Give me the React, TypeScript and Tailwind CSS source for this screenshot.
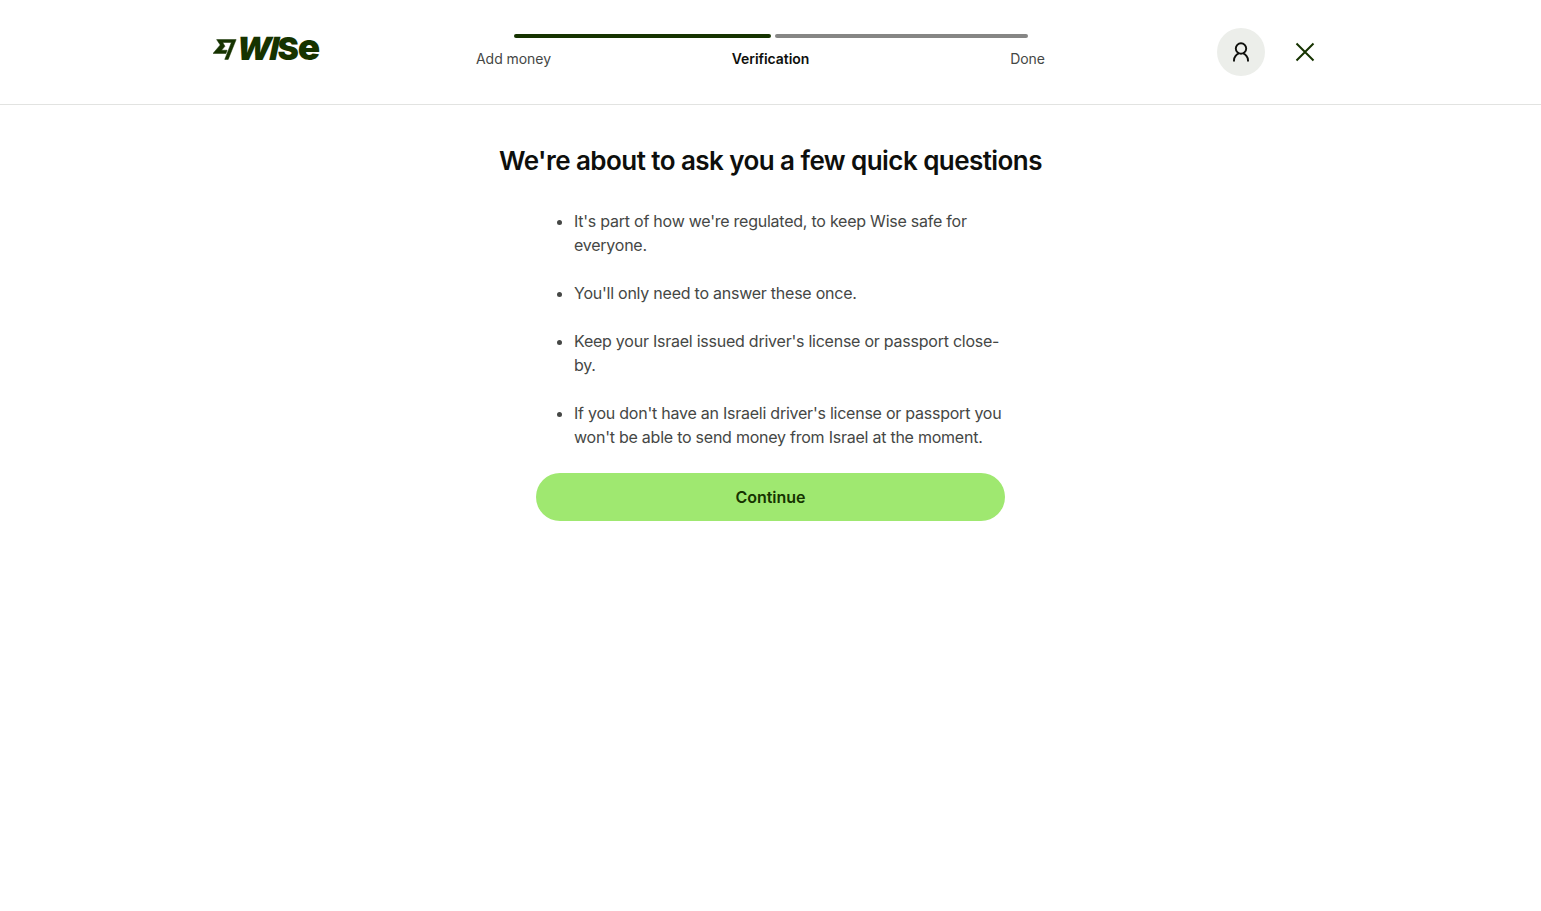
import React from 'react';

const STEPS = [
  { label: 'Add money', active: false },
  { label: 'Verification', active: true },
  { label: 'Done', active: false },
];

const ITEMS = [
  "It's part of how we're regulated, to keep Wise safe for everyone.",
  "You'll only need to answer these once.",
  "Keep your Israel issued driver's license or passport close-by.",
  "If you don't have an Israeli driver's license or passport you won't be able to send money from Israel at the moment.",
];

const Logo: React.FC = () => (
  <div className="flex items-center text-[#163300] -mt-[6px]">
    <svg width="25" height="25" viewBox="0 0 24 24" fill="currentColor" stroke="currentColor" strokeWidth="0.5" aria-hidden="true">
      <path d="M6.94 7.64 0 15.75h12.39l1.11-3.06H8.19l3.25-3.76.01-.1-2.11-3.63h8.3L11.28 21.5h3.32L22.2 2.5H3.48z" />
    </svg>
    <div className="flex items-baseline leading-none font-black -ml-[1px] -mt-[5px]">
      <span className="text-[32px] tracking-[-1.5px] -skew-x-12">WI</span>
      <span className="text-[32px]">S</span>
      <span className="text-[37px] -ml-[1px]">e</span>
    </div>
  </div>
);

const Stepper: React.FC = () => (
  <div className="w-[514px]">
    <div className="flex gap-1">
      <div className="h-1 w-[257px] rounded-full bg-[#163300]"></div>
      <div className="h-1 flex-1 rounded-full bg-[#868685]"></div>
    </div>
    <div className="flex justify-between mt-[10px]">
      {STEPS.map(step => (
        <div key={step.label} className="w-0 flex justify-center">
          <span className={`whitespace-nowrap text-sm leading-[22px] tracking-[-0.05px] ${step.active ? 'font-semibold text-[#0e0f0c]' : 'text-[#454745]'}`}>
            {step.label}
          </span>
        </div>
      ))}
    </div>
  </div>
);

export default function App() {
  return (
    <div className="min-h-screen bg-white font-['Inter',sans-serif]">
      {/* Header */}
      <header className="h-[105px] border-b border-[#e2e3e1]">
        <div className="w-[1116px] h-full mx-auto grid grid-cols-[1fr_auto_1fr] items-center">
          <Logo />
          <Stepper />
          <div className="flex justify-end items-center gap-4">
            <div className="w-12 h-12 rounded-full bg-[#eceeea] flex items-center justify-center text-[#0e0f0c]">
              <svg width="24" height="24" viewBox="0 0 24 24" fill="none" stroke="currentColor" strokeWidth="1.9" aria-hidden="true">
                <circle cx="12" cy="8.5" r="5.2" />
                <path d="M5 21.5v-1.2c0-3.2 2.6-6.2 5-6.9M19 21.5v-1.2c0-3.2-2.6-6.2-5-6.9" />
              </svg>
            </div>
            <button className="w-12 h-12 flex items-center justify-center text-[#163300]">
              <svg width="24" height="24" viewBox="0 0 24 24" fill="none" stroke="currentColor" strokeWidth="2" aria-hidden="true">
                <path d="M3.5 3.5l17 17M20.5 3.5l-17 17" />
              </svg>
            </button>
          </div>
        </div>
      </header>

      {/* Content */}
      <main className="w-[469px] mx-auto pt-10 flex flex-col items-center">
        <h1 className="text-[26px] leading-8 font-semibold tracking-[-0.56px] whitespace-nowrap text-[#0e0f0c]">
          We're about to ask you a few quick questions
        </h1>
        <ul className="w-full mt-[32px] pl-[38px] list-disc text-base leading-6 tracking-[-0.24px] text-[#454745] flex flex-col gap-6">
          {ITEMS.map(item => (
            <li key={item}>{item}</li>
          ))}
        </ul>
        <button className="w-full h-12 mt-6 rounded-3xl bg-[#9fe870] text-base font-semibold tracking-[-0.05px] text-[#163300]">
          Continue
        </button>
      </main>
    </div>
  );
}
